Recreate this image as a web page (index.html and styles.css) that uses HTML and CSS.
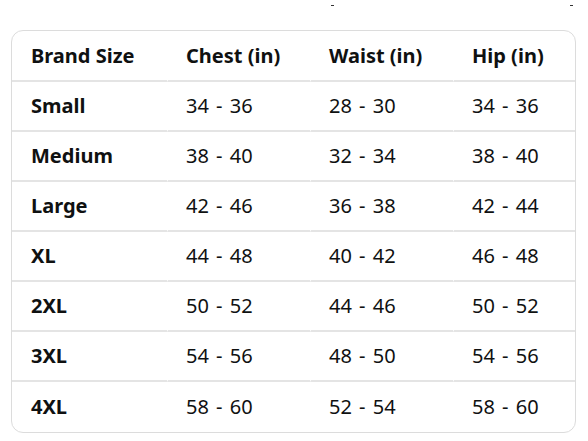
FILE: index.html
```html
<!DOCTYPE html>
<html>
<head>
<meta charset="utf-8">
<link rel="stylesheet" href="styles.css">
</head>
<body>
<div class="top">
  <span class="dash dash-a"></span>
  <span class="dash dash-b"></span>
</div>
<div class="card">
  <table class="chart">
    <colgroup>
      <col class="c1"><col class="c2"><col class="c3"><col class="c4">
    </colgroup>
    <thead>
      <tr><th>Brand Size</th><th>Chest (in)</th><th>Waist (in)</th><th>Hip (in)</th></tr>
    </thead>
    <tbody>
      <tr><th>Small</th><td>34 - 36</td><td>28 - 30</td><td>34 - 36</td></tr>
      <tr><th>Medium</th><td>38 - 40</td><td>32 - 34</td><td>38 - 40</td></tr>
      <tr><th>Large</th><td>42 - 46</td><td>36 - 38</td><td>42 - 44</td></tr>
      <tr><th>XL</th><td>44 - 48</td><td>40 - 42</td><td>46 - 48</td></tr>
      <tr><th>2XL</th><td>50 - 52</td><td>44 - 46</td><td>50 - 52</td></tr>
      <tr><th>3XL</th><td>54 - 56</td><td>48 - 50</td><td>54 - 56</td></tr>
      <tr><th>4XL</th><td>58 - 60</td><td>52 - 54</td><td>58 - 60</td></tr>
    </tbody>
  </table>
</div>
</body>
</html>
```
FILE: styles.css
```css
html, body {
  margin: 0;
  padding: 0;
  background: #fff;
}
body {
  font-family: "Noto Sans", "Open Sans", sans-serif;
  color: #0f1111;
  width: 588px;
  height: 441px;
  overflow: hidden;
}
.top {
  height: 30px;
  display: flex;
  align-items: flex-start;
}
.dash {
  display: block;
  width: 3px;
  height: 1px;
  background: #333;
  margin-top: 5px;
}
.dash-a { margin-left: 331px; }
.dash-b { margin-left: 236px; }
.card {
  margin-left: 11px;
  width: 563px;
  border: 1px solid #dcdcdc;
  border-radius: 12px;
  overflow: hidden;
}
.chart {
  width: 563px;
  border-collapse: separate;
  border-spacing: 0;
  table-layout: fixed;
}
.c1 { width: 155px; }
.c2 { width: 143px; }
.c3 { width: 143px; }
.c4 { width: 122px; }
.chart th, .chart td {
  height: 48px;
  padding: 0 0 0 19px;
  text-align: left;
  vertical-align: middle;
  font-size: 20px;
  line-height: 24px;
  border-bottom: 2px solid #e4e4e4;
  white-space: nowrap;
}
.chart th { font-weight: 700; }
.chart td { font-weight: 400; word-spacing: 2px; }
.chart tr > :first-child { padding-left: 19px; }
.chart tr > :not(:first-child) { border-left: 1px solid #fff; padding-left: 18px; }
.chart thead th { height: 49px; }
.chart tbody tr:last-child th,
.chart tbody tr:last-child td { border-bottom: none; height: 50px; }
```
